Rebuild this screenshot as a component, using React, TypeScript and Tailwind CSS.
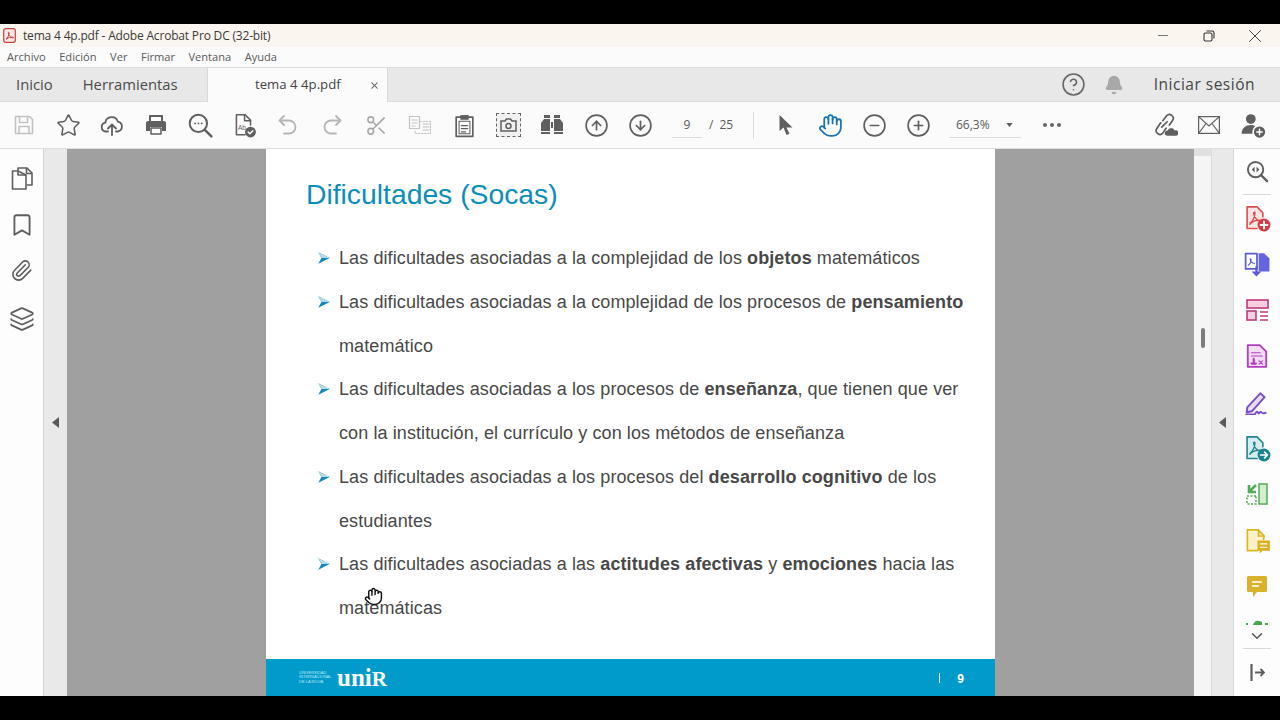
import type { ReactNode } from "react";
import {
  Bell,
  Bookmark,
  ChevronDown,
  CircleArrowDown,
  CircleArrowUp,
  CircleHelp,
  CircleMinus,
  CirclePlus,
  Hand,
  Layers,
  Paperclip,
  Scissors,
  Star,
  X,
} from "lucide-react";

const ui = "font-['Open_Sans','Noto_Sans',sans-serif]";

function Svg({ size = 24, children, className = "" }: { size?: number; children: ReactNode; className?: string }) {
  return (
    <svg width={size} height={size} viewBox="0 0 24 24" fill="none" strokeLinejoin="round" strokeLinecap="round" className={className}>
      {children}
    </svg>
  );
}

function PdfGlyph({ color = "#d5504f" }: { color?: string }) {
  return (
    <path d="M6 16.500c2-1 4-5 4.300-8.500.1-1.500-1.300-1.500-1.200 0 .4 3.500 3.200 6.500 6 7 1.500.2 1.500-1.200 0-1.200-3-.1-6.500 1-8.500 2.700-1 1-.6 1.600-.6 0z" stroke={color} strokeWidth="1.100" />
  );
}

function TBtn({ children }: { children: ReactNode }) {
  return <div className="w-[44px] shrink-0 flex items-center justify-center">{children}</div>;
}

function RailIcon({ children }: { children: ReactNode }) {
  return <div className="h-[46px] shrink-0 flex items-center justify-center">{children}</div>;
}

function Bullet() {
  return (
    <svg width="12" height="12" viewBox="0 0 12 12" className="shrink-0 mt-[15px]">
      <path d="M0.300 0.300 11.700 6 0.300 11.700 3.400 6z" fill="#1289bd" />
      <path d="M0.300 0.300 11.700 6 3.400 6z" fill="#b4dbeb" />
    </svg>
  );
}

function Item({ children }: { children: ReactNode }) {
  return (
    <li className="flex gap-[9px]">
      <Bullet />
      <p className="whitespace-nowrap">{children}</p>
    </li>
  );
}

export default function App() {
  const gray = "#5f5f5f";
  return (
    <div className={`w-[1280px] h-[720px] overflow-hidden bg-black py-[24px] ${ui}`}>
      <div className="h-[672px] flex flex-col relative">
        {/* Title bar */}
        <div className="h-[23px] shrink-0 bg-[#fbf5ef] flex items-center pl-[3px] text-[12px] tracking-[-0.180px] text-[#3a3a3a]">
          <svg width="13" height="15" viewBox="0 0 13 15" className="mr-[7px]">
            <rect x="0.700" y="0.700" width="11.600" height="13.600" rx="2" fill="#fbe9e7" stroke="#c8403d" strokeWidth="1.200" />
            <path d="M3 11c1.500-.8 3-3.500 3.200-6 .1-1-1-1-.9 0 .3 2.500 2.200 4.500 4.500 5 1 .1 1-.9 0-.9-2.200 0-4.800.6-6.300 1.900z" stroke="#c8403d" strokeWidth="1" fill="none" />
          </svg>
          <span>tema 4 4p.pdf - Adobe Acrobat Pro DC (32-bit)</span>
          <div className="ml-auto flex items-center pr-[2px] text-[#444]">
            <div className="w-[46px] flex justify-center">
              <div className="w-[10px] h-px bg-[#777]" />
            </div>
            <div className="w-[46px] flex justify-center">
              <svg width="12" height="12" viewBox="0 0 12 12" fill="none" stroke="#333" strokeWidth="1.100">
                <rect x="1" y="3" width="8" height="8" rx="1.500" />
                <path d="M3.500 1h5.500a2 2 0 0 1 2 2v5.500" />
              </svg>
            </div>
            <div className="w-[46px] flex justify-center">
              <X size={22} strokeWidth={1} color="#333" />
            </div>
          </div>
        </div>

        {/* Menu bar */}
        <div className="h-[20px] shrink-0 bg-[#fbfbfb] flex items-center pl-[7px] gap-[13.500px] text-[11.100px] text-[#5a5a5a]">
          <span>Archivo</span>
          <span>Edición</span>
          <span>Ver</span>
          <span>Firmar</span>
          <span>Ventana</span>
          <span>Ayuda</span>
        </div>

        {/* Tabs */}
        <div className="h-[35px] shrink-0 bg-[#e8e8e8] border-t border-b border-[#dcdcdc] flex items-stretch text-[#4b4b4b]">
          <div className="w-[207px] flex items-center pl-[16px] gap-[30px] text-[14.800px]">
            <span>Inicio</span>
            <span>Herramientas</span>
          </div>
          <div className="w-[181px] -mb-px bg-[#fbfbfb] border-l border-r border-[#d8d8d8] flex items-center pl-[47px] text-[13.200px] text-[#444]">
            <span>tema 4 4p.pdf</span>
            <X size={11} strokeWidth={2.200} className="ml-[28px]" color="#555" />
          </div>
          <div className="flex-1 flex items-center justify-end pr-[25px]">
            <CircleHelp size={25} strokeWidth={1.500} color="#666" />
            <Bell size={20} fill="#a8a8a8" color="#a8a8a8" className="ml-[18px]" />
            <span className="ml-[30px] mt-[1px] text-[15.500px] font-medium tracking-[0.500px] text-[#454545]">Iniciar sesión</span>
          </div>
        </div>

        {/* Toolbar */}
        <div className="h-[47px] shrink-0 bg-[#fbfbfb] border-b border-[#dedede] flex items-center pl-[2px]">
          <TBtn>
            <Svg>
              <path d="M3.500 3.500h14l3 3v14h-17z" stroke="#c2c2c2" strokeWidth="1.600" />
              <path d="M7.500 3.500v6h8v-6M7 20.500v-7h10v7" stroke="#c2c2c2" strokeWidth="1.600" />
            </Svg>
          </TBtn>
          <TBtn>
            <Star size={25} strokeWidth={1.500} color={gray} />
          </TBtn>
          <TBtn>
            <Svg>
              <path d="M8 18.500H6a4.500 4.500 0 0 1-.7-8.900 6.500 6.500 0 0 1 12.600-.9 5 5 0 0 1 0 9.800H16" stroke={gray} strokeWidth="1.800" />
              <path d="M12 22v-10M8 15.500l4-4 4 4" stroke={gray} strokeWidth="1.800" />
            </Svg>
          </TBtn>
          <TBtn>
            <Svg>
              <path d="M6 9V3h12v6" stroke={gray} strokeWidth="2" />
              <path d="M4 8h16a2 2 0 0 1 2 2v8h-4v-4H6v4H2v-8a2 2 0 0 1 2-2z" fill={gray} />
              <rect x="7" y="15" width="10" height="6" stroke={gray} strokeWidth="1.500" />
            </Svg>
          </TBtn>
          <TBtn>
            <Svg size={26}>
              <circle cx="10.500" cy="10.500" r="8" stroke={gray} strokeWidth="1.800" />
              <path d="M16.500 16.500 22.500 22.500" stroke={gray} strokeWidth="2.200" />
              <path d="M7.500 10.500h.1M10.500 10.500h.1M13.500 10.500h.1" stroke={gray} strokeWidth="1.600" />
            </Svg>
          </TBtn>
          <TBtn>
            <Svg size={26}>
              <path d="M13 21H5V2.500h8l5 5V12" stroke={gray} strokeWidth="1.400" />
              <path d="M12.500 2.500v5.500H18" stroke={gray} strokeWidth="1.400" />
              <text x="6.500" y="17" fontSize="6" fill={gray} fontFamily="'Liberation Sans',sans-serif">Ab</text>
              <circle cx="18" cy="18.500" r="5" fill={gray} />
              <path d="M15.800 18.500l1.600 1.600 2.800-2.800" stroke="#fff" strokeWidth="1.300" />
            </Svg>
          </TBtn>
          <TBtn>
            <Svg size={24}>
              <path d="M8 3 3.500 7.500 8 12" stroke="#b5b5b5" strokeWidth="1.800" />
              <path d="M4 7.500h9a6.500 6.500 0 0 1 0 13H8" stroke="#b5b5b5" strokeWidth="1.800" />
            </Svg>
          </TBtn>
          <TBtn>
            <Svg size={24}>
              <path d="M16 3l4.500 4.500L16 12" stroke="#b5b5b5" strokeWidth="1.800" />
              <path d="M20 7.500h-9a6.500 6.500 0 0 0 0 13h5" stroke="#b5b5b5" strokeWidth="1.800" />
            </Svg>
          </TBtn>
          <TBtn>
            <Scissors size={23} strokeWidth={1.600} color="#a8a8a8" />
          </TBtn>
          <TBtn>
            <Svg>
              <path d="M1.500 3.500h10v12h-10z" stroke="#c4c4c4" strokeWidth="1.200" />
              <path d="M4 7h5M4 10h5M4 13h3M15 11h6M15 14h6M15 17h6" stroke="#c4c4c4" strokeWidth="1.200" />
              <path d="M12 8.500h10.500v12H7v-3" stroke="#c4c4c4" strokeWidth="1" strokeDasharray="1.500 1.500" />
            </Svg>
          </TBtn>
          <TBtn>
            <Svg size={25}>
              <path d="M8 4H4v18.500h16V4h-4" stroke={gray} strokeWidth="1.600" />
              <rect x="8" y="2" width="8" height="4.500" fill={gray} />
              <rect x="6.800" y="8" width="10.400" height="12" stroke={gray} strokeWidth="1" />
              <path d="M9 12h6M9 15h6M9 18h4" stroke={gray} strokeWidth="1.200" />
            </Svg>
          </TBtn>
          <TBtn>
            <div className="w-[25px] h-[24px] border border-dashed border-[#666] bg-[#f0f0f0] flex items-center justify-center">
              <svg width="17" height="14" viewBox="0 0 17 14" fill="none" stroke={gray} strokeWidth="1.500">
                <path d="M1 3h4l1.500-2h4L12 3h4v10H1z" />
                <circle cx="8.500" cy="8" r="2.500" />
              </svg>
            </div>
          </TBtn>
          <TBtn>
            <svg width="22" height="20" viewBox="0 0 22 20" fill={gray}>
              <rect x="3" y="0" width="6" height="3" />
              <rect x="13" y="0" width="6" height="3" />
              <path d="M3 4h6v12H0V8zM19 4h-6v12h9V8z" />
              <rect x="0" y="17" width="9" height="2" />
              <rect x="13" y="17" width="9" height="2" />
              <rect x="10" y="7" width="2" height="6" />
            </svg>
          </TBtn>
          <TBtn>
            <CircleArrowUp size={25} strokeWidth={1.600} color={gray} />
          </TBtn>
          <TBtn>
            <CircleArrowDown size={25} strokeWidth={1.600} color={gray} />
          </TBtn>
          <div className="w-[90px] shrink-0 flex items-center text-[12px] text-[#5a5a5a] pl-[10px]">
            <span className="w-[30px] h-[26px] border-b border-[#dcdcdc] flex items-center justify-center">9</span>
            <span className="ml-[7px]">/</span>
            <span className="ml-[6px]">25</span>
          </div>
          <div className="w-px h-[27px] bg-[#dadada] ml-[1px] mr-[10px]" />
          <TBtn>
            <svg width="16" height="22" viewBox="0 0 16 22">
              <path d="M1.500 1v16l4-3.500L8.500 21l3-1.200-3-6.300h6z" fill={gray} />
            </svg>
          </TBtn>
          <TBtn>
            <Hand size={25} strokeWidth={1.700} color="#1a74b4" />
          </TBtn>
          <TBtn>
            <CircleMinus size={25} strokeWidth={1.600} color={gray} />
          </TBtn>
          <TBtn>
            <CirclePlus size={25} strokeWidth={1.600} color={gray} />
          </TBtn>
          <div className="ml-[9px] w-[72px] h-[26px] shrink-0 border-b border-[#dcdcdc] flex items-center pl-[7px] text-[12px] text-[#5a5a5a]">
            <span>66,3%</span>
            <svg width="7" height="4" viewBox="0 0 8 5" className="ml-[16px]">
              <path d="M0 0h8L4 5z" fill={gray} />
            </svg>
          </div>
          <div className="ml-[22px] flex gap-[3px]">
            <div className="w-[4px] h-[4px] rounded-full bg-[#666]" />
            <div className="w-[4px] h-[4px] rounded-full bg-[#666]" />
            <div className="w-[4px] h-[4px] rounded-full bg-[#666]" />
          </div>
          <div className="ml-auto flex items-center pr-[5px]">
            <TBtn>
              <Svg size={26}>
                <path d="M10 8l3.500-4.500a3.500 3.500 0 0 1 5.500 4.300L16 12" stroke={gray} strokeWidth="1.600" />
                <path d="M13 15l-3 4.500a3.500 3.500 0 0 1-5.500-4.300L8 10" stroke={gray} strokeWidth="1.600" />
                <path d="M9 14l5-5" stroke={gray} strokeWidth="1.600" />
                <path d="M14 22a2.500 2.500 0 0 1 .4-5 3.500 3.500 0 0 1 6.600 0 2.500 2.500 0 0 1 1.500 5z" fill={gray} />
              </Svg>
            </TBtn>
            <TBtn>
              <svg width="22" height="18" viewBox="0 0 22 18" fill="none" stroke={gray} strokeWidth="1.200">
                <rect x="0.600" y="0.600" width="20.800" height="16.800" />
                <path d="M0.600 0.600 11 10 21.400 0.600M0.600 17.400 8 7.500M21.400 17.400 14 7.500" />
              </svg>
            </TBtn>
            <TBtn>
              <Svg size={26}>
                <circle cx="10" cy="6.500" r="4.500" fill={gray} />
                <path d="M1.500 20c0-5 4-8 8.500-8 2 0 3 .5 4 1-2 2-3 4.500-2.500 7z" fill={gray} />
                <circle cx="18" cy="18.500" r="5.200" fill={gray} />
                <path d="M18 16v5M15.500 18.500h5" stroke="#fff" strokeWidth="1.400" />
              </Svg>
            </TBtn>
          </div>
        </div>

        {/* Main area */}
        <div className="flex-1 flex min-h-0">
          <div className="w-[44px] shrink-0 bg-[#fdfdfd] border-r border-[#d4d4d4] flex flex-col items-center pt-[6px]">
            <RailIcon>
              <svg width="22" height="23" viewBox="0 0 22 23" fill="none" stroke={gray} strokeWidth="1.600" strokeLinejoin="round">
                <path d="M7 4V1h9l5 5v12h-5" />
                <path d="M15.500 1v5.500H21" />
                <path d="M7 4H1.500v18H15V8z" fill="#fdfdfd" />
                <path d="M7 4v4h8" />
              </svg>
            </RailIcon>
            <RailIcon>
              <Bookmark size={26} strokeWidth={1.700} color={gray} className="mt-[2px]" />
            </RailIcon>
            <RailIcon>
              <Paperclip size={23} strokeWidth={1.700} color={gray} />
            </RailIcon>
            <RailIcon>
              <Layers size={26} strokeWidth={1.600} color={gray} className="mt-[5px]" />
            </RailIcon>
          </div>
          <div className="w-[23px] shrink-0 bg-[#e9e9e9] flex items-center justify-center">
            <svg width="7" height="11" viewBox="0 0 7 11">
              <path d="M7 0v11L0 5.500z" fill="#5a5a5a" />
            </svg>
          </div>

          <div className="flex-1 bg-[#a0a0a0] flex justify-center min-w-0">
            {/* PDF page */}
            <div className="w-[729px] bg-white flex flex-col font-['Liberation_Sans',sans-serif]">
              <h1 className="mt-[26px] ml-[40px] text-[28.300px] leading-[38px] text-[#0d8dba]">Dificultades (Socas)</h1>
              <ul className="mt-[24px] ml-[52px] text-[18px] leading-[43.750px] text-[#484848] tracking-[0.095px]">
                <Item>
                  Las dificultades asociadas a la complejidad de los <b>objetos</b> matemáticos
                </Item>
                <Item>
                  Las dificultades asociadas a la complejidad de los procesos de <b>pensamiento</b>
                  <br />
                  matemático
                </Item>
                <Item>
                  Las dificultades asociadas a los procesos de <b>enseñanza</b>, que tienen que ver
                  <br />
                  con la institución, el currículo y con los métodos de enseñanza
                </Item>
                <Item>
                  Las dificultades asociadas a los procesos del <b>desarrollo cognitivo</b> de los
                  <br />
                  estudiantes
                </Item>
                <Item>
                  Las dificultades asociadas a las <b>actitudes afectivas</b> y <b>emociones</b> hacia las
                  <br />
                  matemáticas
                </Item>
              </ul>
              <div className="mt-auto h-[37px] bg-[#009bcb] flex items-center pl-[33px] text-white">
                <div className="w-[38px] text-[4px] leading-[4.500px] text-[#bfe6f3]">
                  UNIVERSIDAD
                  <br />
                  INTERNACIONAL
                  <br />
                  DE LA RIOJA
                </div>
                <span className="text-[25px] leading-none font-bold font-['Liberation_Serif',serif]">
                  uni<span className="text-[21px]">R</span>
                </span>
                <div className="ml-auto w-px h-[10px] bg-white" />
                <span className="ml-[17px] mr-[31px] mt-[2px] text-[12px] font-bold">9</span>
              </div>
            </div>
          </div>

          <div className="w-[18px] shrink-0 bg-[#f5f5f5] border-r border-[#dcdcdc] flex flex-col items-center">
            <div className="w-full h-[7px] bg-[#e0e0e0]" />
            <div className="w-[4px] h-[20px] mt-[172px] rounded-sm bg-[#7c7c7c]" />
          </div>
          <div className="w-[21px] shrink-0 bg-[#e9e9e9] flex items-center justify-center">
            <svg width="7" height="11" viewBox="0 0 7 11">
              <path d="M7 0v11L0 5.500z" fill="#5a5a5a" />
            </svg>
          </div>

          {/* Right tools rail */}
          <div className="w-[47px] shrink-0 bg-[#fdfdfd] border-l border-[#d8d8d8] flex flex-col items-center overflow-hidden">
            <div className="h-[45px] shrink-0 flex items-center justify-center">
              <Svg size={23}>
                <circle cx="10" cy="10" r="8" stroke={gray} strokeWidth="2" />
                <path d="M16 16l6 6" stroke={gray} strokeWidth="2.400" />
                <path d="M9 7v6l-3-3zM11 7v6l3-3z" fill={gray} />
              </Svg>
            </div>
            <div className="w-[28px] h-px shrink-0 bg-[#d8d8d8]" />
            <div className="h-[46px] shrink-0 flex items-center justify-center">
              <Svg size={28}>
                <path d="M12 21H3.500V2.500H12l5 5V11" stroke="#d5504f" strokeWidth="1.400" fill="#fbe6e4" />
                <PdfGlyph />
                <circle cx="18" cy="18" r="5.500" fill="#d63a45" />
                <path d="M18 15v6M15 18h6" stroke="#fff" strokeWidth="1.600" />
              </Svg>
            </div>
            <RailIcon>
              <Svg size={26}>
                <path d="M12 2.500H1.500v14H12z" stroke="#5a5ad6" strokeWidth="1.600" fill="#fff" />
                <path d="M13.500 2h5l5 5v12h-10z" fill="#6464e0" />
                <path d="M4 13c1.500-1 2.500-3 2.500-5 0-1-1-1-.8 0 .4 2 1.500 3 4 3.500" stroke="#5a5ad6" strokeWidth="1" />
                <path d="M12.500 14v5h3.500l-4.500 4.500L7 19h3.500v-5z" fill="#5a5ad6" />
              </Svg>
            </RailIcon>
            <RailIcon>
              <svg width="23" height="22" viewBox="0 0 23 22" fill="#f6cfe0" stroke="#c03a7c" strokeWidth="1.600">
                <rect x="1" y="1" width="21" height="8" />
                <rect x="1" y="12" width="9" height="9" />
                <path d="M14 13h8M14 17h8M14 21h8" fill="none" strokeWidth="1.300" />
              </svg>
            </RailIcon>
            <RailIcon>
              <Svg size={26}>
                <path d="M3.500 2h11l6 6v14h-17z" stroke="#b03fc0" strokeWidth="1.700" fill="#f3ddf6" />
                <path d="M7 9h8M7 12h10" stroke="#b03fc0" strokeWidth="1.100" />
                <path d="M9 14.500v3.500M7 19h4" stroke="#b03fc0" strokeWidth="2" />
                <path d="M14 16.500l3 3M17 16.500l-3 3" stroke="#b03fc0" strokeWidth="1.200" />
              </Svg>
            </RailIcon>
            <RailIcon>
              <Svg size={26}>
                <path d="M3 17 15 4l4 3.500L7.500 20.500 2.500 21.500z" stroke="#7b4fc4" strokeWidth="1.800" fill="#e6dcf6" />
                <path d="M2 23.500h8c1-2.500 2.500-3.500 3-1.500s2-2 3-.5 2 1 4 .5" stroke="#7b4fc4" strokeWidth="1.800" />
              </Svg>
            </RailIcon>
            <RailIcon>
              <Svg size={28}>
                <path d="M12 21H3.500V2.500H12l5 5V11" stroke="#25868e" strokeWidth="1.400" fill="#d6edef" />
                <PdfGlyph color="#25868e" />
                <circle cx="18" cy="18" r="5.500" fill="#19838d" />
                <path d="M15 18h6M18.500 15.500 21 18l-2.500 2.500" stroke="#fff" strokeWidth="1.400" />
              </Svg>
            </RailIcon>
            <RailIcon>
              <svg width="22" height="22" viewBox="0 0 22 22" fill="none" stroke="#55ab58" strokeWidth="1.500">
                <rect x="13" y="1" width="8" height="20" fill="#d4edd0" />
                <path d="M10 13H1v8h9z" strokeDasharray="2 1.500" />
                <path d="M3 2v7h7M3 9l7-7" strokeWidth="2.600" />
              </svg>
            </RailIcon>
            <RailIcon>
              <Svg size={27}>
                <path d="M12 21H3V2.500h9.500l5 5V11" stroke="#dcb522" strokeWidth="1.500" fill="#fbf0c8" />
                <path d="M13 2.500V8h5" stroke="#dcb522" strokeWidth="1.500" />
                <path d="M12 12h11v9h-6.500L14 23.500V21h-2z" fill="#d9af1f" />
                <path d="M14.500 15h6M14.500 18h6" stroke="#fff" strokeWidth="1.100" />
              </Svg>
            </RailIcon>
            <RailIcon>
              <svg width="20" height="21" viewBox="0 0 20 21">
                <path d="M1.500 0h17A1.500 1.500 0 0 1 20 1.500v13a1.500 1.500 0 0 1-1.500 1.500H10l-4 5v-5H1.500A1.500 1.500 0 0 1 0 14.500v-13A1.500 1.500 0 0 1 1.500 0z" fill="#d9b12a" />
                <path d="M5 6h10M5 10h7" stroke="#fff" strokeWidth="1.600" />
              </svg>
            </RailIcon>
            <div className="h-[16px] shrink-0 overflow-hidden flex items-end justify-center">
              <svg width="22" height="5" viewBox="0 0 22 5">
                <path d="M0 5h2V3H0zM7 5c1-3 3-5 6-4l3 1v3zM19 5h3V3h-3z" fill="#4aa552" />
              </svg>
            </div>
            <ChevronDown size={18} strokeWidth={2} color="#555" className="shrink-0 mt-[2px]" />
            <div className="w-[28px] h-px shrink-0 bg-[#d8d8d8] mt-[3px]" />
            <div className="h-[46px] shrink-0 flex items-center justify-center">
              <svg width="15" height="17" viewBox="0 0 15 17" fill="none" stroke={gray} strokeWidth="1.800">
                <path d="M1.500 0v17" strokeWidth="2.200" />
                <path d="M5 8.500h9M10.500 5l3.500 3.500-3.500 3.500" />
              </svg>
            </div>
          </div>
        </div>

        {/* Hand cursor over the page */}
        <div className="absolute left-[364px] top-[563px]">
          <Hand size={19} strokeWidth={1.800} color="#111" fill="#fff" />
        </div>
      </div>
    </div>
  );
}
